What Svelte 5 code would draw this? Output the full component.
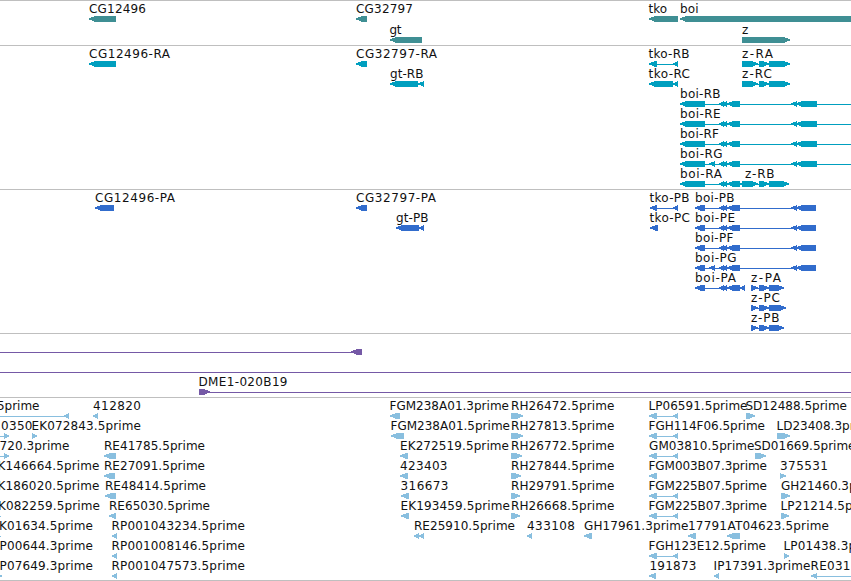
<script>
  // label: [text, start, end]
  // glyph: [start, end, direction], direction is 'l' or 'r', '-' is a thin connector
  const pair = [[649, 657, 'l'], [649, 678, '-'], [673, 678, 'l']];
  const zExons = [[742, 790, '-'], [742, 758, 'r'], [759, 769, 'r'], [769, 790, 'r']];
  const middle = [[719, 724, 'l'], [722, 727, 'l'], [727, 740, 'l']];
  const boiR = [[680, 851, '-'], [680, 705, 'l'], ...middle, [791, 797, 'l'], [796, 817, 'l']];
  const boiP = [[695, 816, '-'], [695, 705, 'l'], ...middle, [791, 797, 'l'], [796, 816, 'l']];

  const tracks = [
    {
      name: 'gene',
      rowHeight: 21,
      rows: [
        {
          labels: [['CG12496', 89, 146], ['CG32797', 356, 413], ['tko', 648.5, 667], ['boi', 680, 698.5]],
          glyphs: [[89, 116, 'l'], [356, 367, 'l'], [649, 678, 'l'], [680, 860, 'l']]
        },
        {
          labels: [['gt', 389.5, 401.5], ['z', 742, 748.5]],
          glyphs: [[390, 422, 'l'], [742, 790, 'r']]
        }
      ]
    },
    {
      name: 'transcript',
      rowHeight: 20,
      rows: [
        {
          labels: [['CG12496-RA', 89, 170], ['CG32797-RA', 356, 437], ['tko-RB', 648.5, 689.5], ['z-RA', 742, 773]],
          glyphs: [[89, 116, 'l'], [356, 367, 'l'], ...pair, ...zExons]
        },
        {
          labels: [['gt-RB', 390, 423.5], ['tko-RC', 648.5, 690], ['z-RC', 742, 772]],
          glyphs: [[390, 418, 'l'], [418, 424, 'l'], [649, 673, 'l'], [673, 678, 'l'], ...zExons]
        },
        { labels: [['boi-RB', 680, 720.5]], glyphs: boiR },
        { labels: [['boi-RE', 680, 720.5]], glyphs: boiR },
        { labels: [['boi-RF', 680, 719]], glyphs: boiR },
        { labels: [['boi-RG', 680, 722.5]], glyphs: [...boiR, [709, 715, 'l']] },
        {
          labels: [['boi-RA', 680, 722], ['z-RB', 745, 774.5]],
          glyphs: [[680, 789, '-'], [680, 705, 'l'], ...middle, [740, 745, 'l'], [742, 758, 'r'], [759, 769, 'r'], [769, 789, 'r']]
        }
      ]
    },
    {
      name: 'protein',
      rowHeight: 20,
      rows: [
        {
          labels: [['CG12496-PA', 95, 175], ['CG32797-PA', 356, 436], ['tko-PB', 649.5, 689.5], ['boi-PB', 695, 734.5]],
          glyphs: [[95, 114, 'l'], [356, 367, 'l'], [650, 657, 'l'], [650, 678, '-'], [673, 678, 'l'], ...boiP]
        },
        {
          labels: [['gt-PB', 396, 428.5], ['tko-PC', 649.5, 690], ['boi-PE', 695, 735]],
          glyphs: [[396, 419, 'l'], [419, 424, 'l'], [650, 658, 'l'], ...boiP]
        },
        { labels: [['boi-PF', 695, 733.5]], glyphs: boiP },
        { labels: [['boi-PG', 695, 736.5]], glyphs: [...boiP, [709, 715, 'l']] },
        {
          labels: [['boi-PA', 695, 736], ['z-PA', 751, 781]],
          glyphs: [[695, 745, '-'], [695, 705, 'l'], ...middle, [740, 745, 'l'], [751, 758, 'r'], [751, 784, '-'], [759, 769, 'r'], [769, 784, 'r']]
        },
        {
          labels: [['z-PC', 751, 780]],
          glyphs: [[751, 758, 'r'], [751, 786, '-'], [759, 769, 'r'], [769, 786, 'r']]
        },
        {
          labels: [['z-PB', 751, 779.5]],
          glyphs: [[751, 758, 'r'], [751, 784, '-'], [759, 769, 'r'], [769, 784, 'r']]
        }
      ]
    },
    {
      name: 'clone',
      rowHeight: 20,
      rows: [
        { labels: [], glyphs: [[0, 356, '-'], [351, 362, 'l']] },
        { labels: [], glyphs: [[0, 851, '-']] },
        { labels: [['DME1-020B19', 198.5, 287.5]], glyphs: [[199, 210, 'r'], [199, 851, '-']] }
      ]
    },
    {
      name: 'est',
      rowHeight: 20,
      rows: [
        {
          labels: [['5prime', -3, 39.5], ['412820', 93, 141], ['FGM238A01.3prime', 389.5, 509], ['RH26472.5prime', 511, 614.5], ['LP06591.5prime', 648.5, 747.5], ['SD12488.5prime', 745.5, 847]],
          glyphs: [[0, 69, '-'], [64, 69, 'l'], [93, 98, 'l'], [390, 400, 'l'], [511, 523, 'r'], ...pair, [746, 755, 'r']]
        },
        {
          labels: [['0350', 1, 32.5], ['EK072843.5prime', 31.5, 141], ['FGM238A01.5prime', 390.5, 510], ['RH27813.5prime', 511, 614.5], ['FGH114F06.5prime', 648.5, 765], ['LD23408.3prime', 776.5, 877]],
          glyphs: [[0, 9, '-'], [4, 9, 'r'], [32, 37, 'r'], [391, 404, 'l'], [511, 523, 'r'], ...pair, [777, 790, 'r']]
        },
        {
          labels: [['720.3prime', -0.5, 69.5], ['RE41785.5prime', 104, 205], ['EK272519.5prime', 400, 509], ['RH26772.5prime', 511, 614.5], ['GM03810.5prime', 649, 754.5], ['SD01669.5prime', 754, 855.5]],
          glyphs: [[0, 9, '-'], [4, 9, 'r'], [104, 116, 'l'], [400, 408, 'l'], [511, 522, 'r'], ...pair, [755, 766, 'r']]
        },
        {
          labels: [['K146664.5prime', -2.5, 99.5], ['RE27091.5prime', 104, 205], ['423403', 400, 447.5], ['RH27844.5prime', 511, 614.5], ['FGM003B07.3prime', 648.5, 767], ['375531', 780, 828]],
          glyphs: [[104, 115, 'l'], [400, 408, 'l'], [511, 521, 'r'], [649, 657, 'l'], [780, 786, 'r']]
        },
        {
          labels: [['K186020.5prime', -2.5, 99.5], ['RE48414.5prime', 105, 206], ['316673', 400.5, 448.5], ['RH29791.5prime', 511, 614.5], ['FGM225B07.5prime', 648.5, 767], ['GH21460.3prime', 781, 884]],
          glyphs: [[105, 116, 'l'], [401, 409, 'l'], [511, 520, 'r'], ...pair, [781, 790, 'r']]
        },
        {
          labels: [['K082259.5prime', -2, 100], ['RE65030.5prime', 109, 210], ['EK193459.5prime', 400.5, 510], ['RH26668.5prime', 511, 614.5], ['FGM225B07.3prime', 648.5, 767], ['LP21214.5prime', 780.5, 880.5]],
          glyphs: [[0, 1, '-'], [109, 116, 'l'], [401, 409, 'l'], [511, 520, 'r'], ...pair, [781, 789, 'r']]
        },
        {
          labels: [['K01634.5prime', -1, 93], ['RP001043234.5prime', 111.5, 245], ['RE25910.5prime', 414, 515], ['433108', 527, 575], ['GH17961.3prime', 584, 688.5], ['17791', 688, 727], ['AT04623.5prime', 727.5, 829]],
          glyphs: [[0, 1, '-'], [112, 117, 'l'], [414, 419, 'l'], [419, 424, 'l'], [527, 532, 'l'], [584, 592, 'l'], [688, 696, 'l'], [727, 740, 'l']]
        },
        {
          labels: [['P00644.3prime', -0.5, 93], ['RP001008146.5prime', 111.5, 245], ['FGH123E12.5prime', 648.5, 766], ['LP01438.3prime', 783.5, 884]],
          glyphs: [[112, 117, 'l'], ...pair, [784, 789, 'r']]
        },
        {
          labels: [['P07649.3prime', -0.5, 93], ['RP001047573.5prime', 111.5, 245], ['191873', 649.5, 696.5], ['IP17391.3prime', 713.5, 810.5], ['RE031', 810.5, 850.5]],
          glyphs: [[-3, 2, 'r'], [112, 117, 'l'], [649, 656, 'l'], [714, 719, 'l'], [811, 817, 'l'], [811, 851, '-']]
        }
      ]
    }
  ];

  function arrow(start, end, direction) {
    const tip = Math.min(6, end - start);
    if (direction === 'l') {
      return `${start},2.4 ${start + tip},0 ${end},0 ${end},6 ${start + tip},6 ${start},3.4`;
    }
    return `${start},0 ${end - tip},0 ${end},2.4 ${end},3.4 ${end - tip},6 ${start},6`;
  }
</script>

<main class="browser">
  {#each tracks as track}
    <section class="track {track.name}">
      {#each track.rows as row}
        <svg class="row" width="851" height={track.rowHeight}>
          <g class="glyphs" transform="translate(0 15)">
            {#each row.glyphs as [start, end, direction]}
              {#if direction === '-'}
                <rect x={start} y="3" width={end - start} height="1" />
              {:else}
                <polygon points={arrow(start, end, direction)} />
              {/if}
            {/each}
          </g>
          {#each row.labels as [text, start, end]}
            <text x={start} y="12" textLength={end - start}>{text}</text>
          {/each}
        </svg>
      {/each}
    </section>
  {/each}
</main>

<style>
  :global(body) {
    margin: 0;
    background: #fff;
    overflow: hidden;
  }

  .browser {
    width: 851px;
    height: 581px;
    overflow: hidden;
    font-family: "DejaVu Sans", sans-serif;
    font-size: 12px;
  }

  .track {
    display: flex;
    flex-direction: column;
    border-top: 1px solid #bfbfbf;
    padding-bottom: 3px;
  }

  .row {
    display: block;
    flex: none;
    overflow: visible;
  }

  .row text {
    fill: #111;
  }

  .glyphs {
    shape-rendering: crispEdges;
  }

  .gene {
    fill: #3f8f94;
    padding-bottom: 2px;
  }

  .transcript {
    fill: #009fbf;
  }

  .protein {
    fill: #316ccc;
  }

  .clone {
    fill: #7559a6;
  }

  .est {
    fill: #89bfdf;
    padding-bottom: 2px;
    border-bottom: 1px solid #bfbfbf;
  }
</style>
